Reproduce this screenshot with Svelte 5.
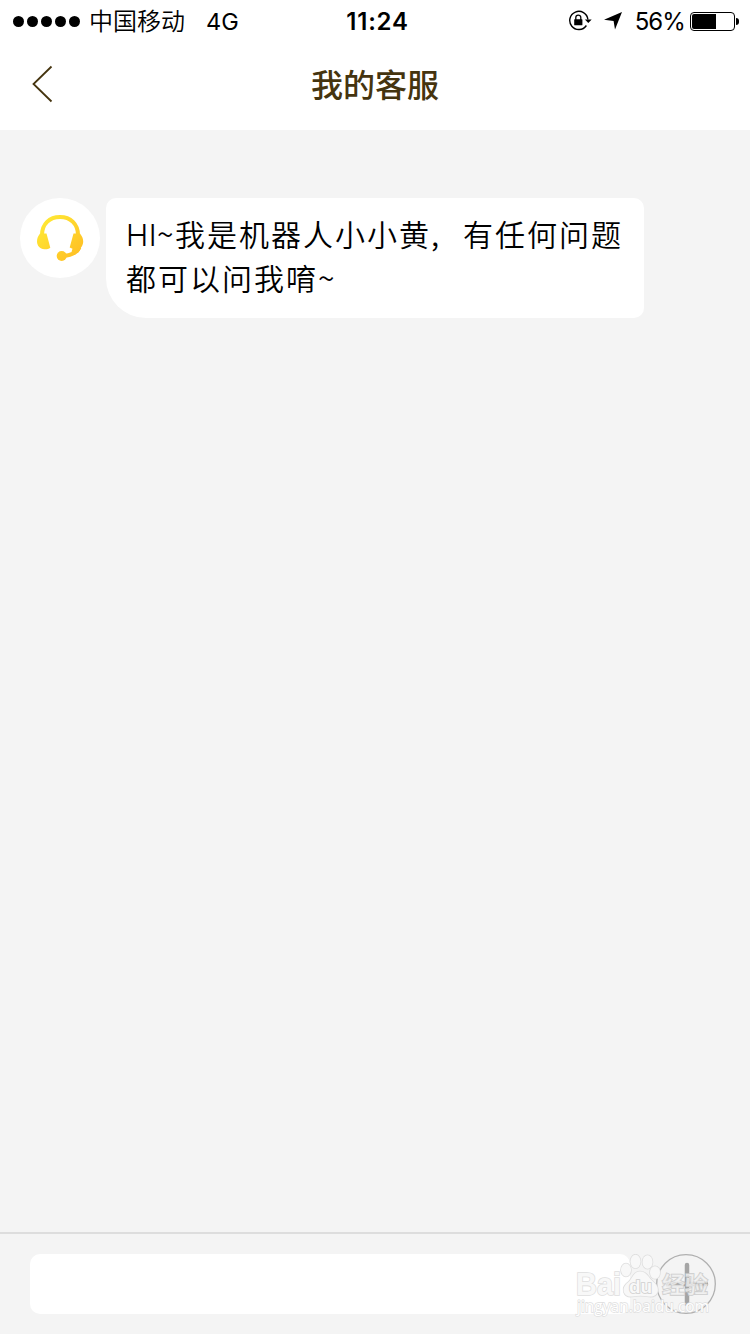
<script lang="ts">
	let { carrier = '中国移动', network = '4G', time = '11:24', battery = 56 }: {
		carrier?: string;
		network?: string;
		time?: string;
		battery?: number;
	} = $props();

	const messages = [{ id: 1, lines: ['HI~我是机器人小小黄,有任何问题', '都可以问我唷~'] }];

	let draft = $state('');

	// Latin runs are set tighter than the Chinese text around them
	function runs(line: string) {
		return line.split(/([A-Za-z]+|~|,)/).filter(Boolean);
	}
</script>

<div class="screen">
	<div class="status">
		<div class="status-left">
			<div class="signal">
				{#each Array(5) as _}
					<i></i>
				{/each}
			</div>
			<span class="carrier">{carrier}</span>
			<span class="network">{network}</span>
		</div>
		<span class="time">{time}</span>
		<div class="status-right">
			<!-- rotation lock -->
			<svg class="lock" width="24" height="22" viewBox="0 0 24 22">
				<path d="M18.4 15.5A9.1 9.1 0 1 1 19.9 9.5" fill="none" stroke="#000" stroke-width="1.4" />
				<path d="M16.9 9.5h6.8L20.3 13z" />
				<rect x="6.2" y="9.2" width="8.2" height="6" rx=".5" />
				<path d="M7.8 10V7.6a2.5 2.5 0 0 1 5 0V10" fill="none" stroke="#000" stroke-width="1.3" />
			</svg>
			<svg class="location" width="18" height="18" viewBox="0 0 18 18">
				<path d="M18 0 11 17.5 9.6 9 0 7.8z" />
			</svg>
			<span class="percent">{battery}%</span>
			<div class="battery">
				<div class="battery-case"><div class="battery-fill" style="width: {battery + 3}%"></div></div>
				<div class="battery-cap"></div>
			</div>
		</div>
	</div>

	<header>
		<button class="back" aria-label="返回">
			<svg width="22" height="38" viewBox="0 0 22 38">
				<path d="M20.5 1.5 2.5 19l18 17.5" fill="none" stroke="#45340f" stroke-width="1.8" />
			</svg>
		</button>
		<h1>我的客服</h1>
	</header>

	<main>
		{#each messages as message (message.id)}
			<div class="message">
				<div class="avatar">
					<svg width="48" height="48" viewBox="0 0 48 48">
						<defs>
							<linearGradient id="gold" gradientUnits="userSpaceOnUse" x1="4" y1="6" x2="42" y2="44">
								<stop offset="0" stop-color="#ffea35" />
								<stop offset="1" stop-color="#ffbf24" />
							</linearGradient>
						</defs>
						<path d="M6 21C6 10 13.5 3 24 3s18 7 18 18" fill="none" stroke="url(#gold)" stroke-width="4" />
						<path d="M43.5 33C41 38 35.5 41.5 27 42" fill="none" stroke="url(#gold)" stroke-width="4" />
						<g fill="url(#gold)">
							<path d="M4 19.5h6.5l3.8 14.3C12.5 35 10.5 35.5 8.5 35.3 3.8 35 1 31.5 1 27.5c0-3 1-5.5 3-8z" />
							<path d="M44 19.5h-6.5L33.7 33.5l2.8 1.3-1 3 6.5 1.2c1.7-2 2.5-3.5 3-5.5 1.5-1.7 2.2-4 2.2-6 0-3-1.2-5.5-3.2-8z" />
							<circle cx="25.7" cy="42" r="5" />
						</g>
					</svg>
				</div>
				<div class="bubble">
					{#each message.lines as line}
						<p>
							{#each runs(line) as run}<span class:tight={/^[A-Za-z]/.test(run)} class:tilde={run === '~'} class:comma={run === ','}>{run}</span>{/each}
						</p>
					{/each}
				</div>
			</div>
		{/each}
	</main>

	<footer>
		<input bind:value={draft} aria-label="消息" />
		<button class="add" aria-label="更多">
			<svg width="60" height="60" viewBox="0 0 60 60">
				<circle cx="30" cy="30" r="29.3" fill="none" stroke="#b0b0b0" stroke-width="1.3" />
				<path d="M31 11v39M12 30h38" stroke="#a5a5a5" stroke-width="4.5" stroke-linecap="round" />
			</svg>
		</button>
		<svg class="watermark" width="142" height="70" viewBox="0 0 142 70">
			<g fill="#f8f8f8" stroke="#dedede" stroke-width="1.6" paint-order="stroke">
				<text class="latin" x="4" y="41" font-size="31" textLength="45" lengthAdjust="spacingAndGlyphs">Bai</text>
				<ellipse cx="54" cy="16" rx="5" ry="6.5" />
				<ellipse cx="63.5" cy="7.5" rx="5" ry="6.8" />
				<ellipse cx="75.5" cy="8" rx="5" ry="6.8" />
				<ellipse cx="83" cy="18.5" rx="5" ry="6.3" />
				<path d="M68 17.5c-7 0-7 7-12 11-8 6-4 15 4 14 6-1 11-1 17 0 9 1 12-8 5-14-6-5-7-11-14-11z" />
				<text class="latin" x="57" y="39" font-size="19" textLength="23" stroke="#cfcfcf">du</text>
			</g>
			<text class="cjk" x="90" y="39" font-size="23" textLength="46">经验</text>
			<text class="site" x="5" y="58" font-size="15.5" textLength="132">jingyan.baidu.com</text>
		</svg>
	</footer>
</div>

<style>
	:global(body) {
		margin: 0;
	}

	.screen {
		display: flex;
		flex-direction: column;
		width: 750px;
		height: 1334px;
		overflow: hidden;
		background: #f4f4f4;
		color: #000;
		font-family: Inter, 'Noto Sans CJK SC', sans-serif;
	}

	.status {
		display: grid;
		grid-template-columns: 1fr auto 1fr;
		align-items: center;
		box-sizing: border-box;
		height: 40px;
		padding: 1px 11px 0 13px;
		background: #fff;
		font-size: 24px;
		line-height: 39px;
	}

	.status-left,
	.status-right,
	.signal,
	.battery {
		display: flex;
		align-items: center;
	}

	.signal {
		gap: 3px;
		margin-right: 9px;
	}

	.signal i {
		width: 11px;
		height: 11px;
		border-radius: 50%;
		background: #000;
	}

	.carrier {
		margin-right: 21px;
		padding-top: 1px;
		font-weight: 350;
	}

	.network {
		font-size: 23.5px;
	}

	.time {
		margin-left: 3px;
		font-weight: 600;
		font-size: 24px;
		letter-spacing: 0.8px;
	}

	.status-right {
		justify-content: flex-end;
	}

	.lock {
		margin-right: 12px;
	}

	.location {
		margin-right: 13px;
	}

	.percent {
		margin-right: 5px;
		font-size: 24px;
		letter-spacing: -0.9px;
	}

	.battery-case {
		box-sizing: border-box;
		width: 45px;
		height: 19px;
		padding: 1px;
		border: 1px solid #000;
		border-radius: 4px;
	}

	.battery-fill {
		height: 100%;
		border-radius: 2px 0 0 2px;
		background: #000;
	}

	.battery-cap {
		width: 3px;
		height: 7px;
		margin-left: 1px;
		border-radius: 0 3px 3px 0;
		background: #000;
	}

	header {
		display: grid;
		grid-template-columns: 80px 1fr 80px;
		align-items: center;
		height: 90px;
		background: #fff;
	}

	button {
		padding: 0;
		border: 0;
		background: none;
	}

	.back svg,
	.add svg {
		display: block;
	}

	.back {
		width: 22px;
		margin: 0 0 2px 31px;
	}

	h1 {
		margin: 0;
		padding-top: 2px;
		color: #45340f;
		font-weight: 500;
		font-size: 32px;
		line-height: 88px;
		text-align: center;
	}

	main {
		flex: 1;
		padding: 68px 20px 0;
	}

	.message {
		display: flex;
		align-items: flex-start;
		gap: 6px;
	}

	.avatar {
		display: flex;
		align-items: center;
		justify-content: center;
		width: 80px;
		height: 80px;
		border-radius: 50%;
		background: #fff;
	}

	.bubble {
		box-sizing: border-box;
		width: 538px;
		height: 120px;
		padding: 13px 0 0 20px;
		border-radius: 10px 10px 10px 40px;
		background: #fff;
	}

	.bubble p {
		height: 44px;
		margin: 0;
		font-weight: 350;
		font-size: 30px;
		line-height: 44px;
		letter-spacing: 2px;
		white-space: nowrap;
	}

	.bubble .tight {
		letter-spacing: 0.5px;
	}

	.bubble .tilde {
		display: inline-block;
		width: 18px;
		font-family: 'Noto Sans CJK SC', sans-serif;
		letter-spacing: 0;
	}

	.bubble .comma {
		display: inline-block;
		width: 32px;
		font-family: 'Noto Sans CJK SC', sans-serif;
	}

	footer {
		position: relative;
		display: flex;
		align-items: center;
		box-sizing: border-box;
		height: 102px;
		padding: 0 30px;
		border-top: 2px solid #ddd;
	}

	input {
		box-sizing: border-box;
		width: 600px;
		height: 60px;
		padding: 0 16px;
		border: 0;
		border-radius: 10px;
		background: #fff;
		font-size: 28px;
	}

	.add {
		margin-left: 26px;
	}

	.watermark {
		position: absolute;
		top: 20px;
		left: 572px;
	}

	.latin {
		font-family: 'Liberation Sans', sans-serif;
		font-weight: 700;
	}

	.cjk {
		fill: #f4f4f4;
		fill-opacity: 0.7;
		stroke: #cbcbcb;
		stroke-width: 1.4px;
		paint-order: stroke;
		font-family: 'Noto Sans CJK SC', sans-serif;
		font-weight: 700;
	}

	.site {
		fill: #fff;
		stroke: #dedede;
		stroke-width: 1.4px;
		paint-order: stroke;
		font-family: 'Open Sans', sans-serif;
	}
</style>
